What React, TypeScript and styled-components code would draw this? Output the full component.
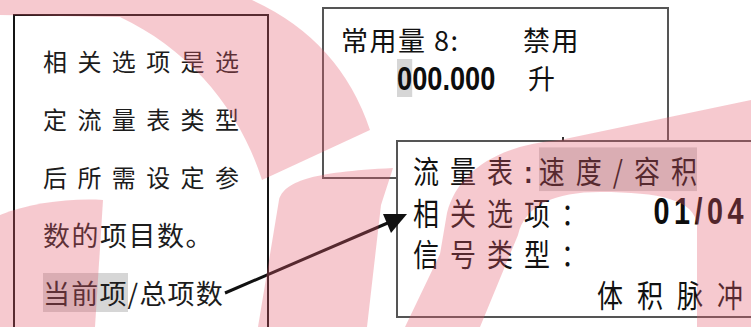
import React from "react";
import styled, { createGlobalStyle } from "styled-components";

const CJK = `"Noto Sans CJK SC", "Noto Sans", sans-serif`;
const NUM = `"Liberation Sans", Arial, sans-serif`;

const GlobalStyle = createGlobalStyle`
  html, body {
    margin: 0;
    padding: 0;
    background: #fff;
  }
  body {
    width: 751px;
    height: 327px;
    overflow: hidden;
    font-family: ${CJK};
    color: #111;
  }
`;

const Page = styled.div`
  position: relative;
  width: 751px;
  height: 327px;
  overflow: hidden;
  display: flex;
  align-items: flex-start;
  background: #fff;
`;

/* left explanation box */
const NoteBox = styled.div`
  flex: none;
  box-sizing: border-box;
  width: 256px;
  height: 340px;
  margin: 14px 0 0 13px;
  border: 2px solid #141414;
  padding: 16px 0 0 28px;
  display: flex;
  flex-direction: column;
`;

const NoteLine = styled.div<{ $size: number; $spacing: number }>`
  font-family: ${CJK};
  font-size: ${(p) => p.$size}px;
  letter-spacing: ${(p) => p.$spacing}px;
  line-height: 58px;
  height: 58px;
  white-space: nowrap;
  color: #1c1c1c;
`;

const Mark = styled.span`
  background: #d6d6d6;
`;

// last glyph of a spaced run, so no trailing gap sticks out
const Tail = styled.span`
  letter-spacing: 0;
`;

/* right side: two screens */
const Screens = styled.div`
  flex: none;
  display: flex;
  flex-direction: column;
  align-items: flex-start;
  margin: 7px 0 0 53px;
`;

const TopScreen = styled.div`
  flex: none;
  box-sizing: border-box;
  width: 347px;
  height: 172px;
  border: 2px solid #555;
  padding: 12px 0 0 17px;
  display: grid;
  grid-template-columns: 182px auto;
  grid-auto-rows: 38px;
  align-content: start;
  align-items: center;
  font-family: ${CJK};
  font-size: 27px;
  letter-spacing: 1.5px;
  white-space: nowrap;
`;

const Cell = styled.div<{ $indent?: number }>`
  padding-left: ${(p) => p.$indent || 0}px;
  line-height: 38px;
`;

const BigNum = styled.span<{ $size: number; $spacing?: number; $origin: string }>`
  display: inline-block;
  font-family: ${NUM};
  font-weight: 700;
  font-size: ${(p) => p.$size}px;
  letter-spacing: ${(p) => p.$spacing || 0}px;
  transform: scaleX(0.8);
  transform-origin: ${(p) => p.$origin};
  color: #0d0d0d;
`;

const PanelScreen = styled.div`
  flex: none;
  position: relative;
  z-index: 1;
  box-sizing: border-box;
  width: 420px;
  height: 178px;
  margin: -39px 0 0 74px;
  background: #fff;
  border: 2px solid #555;
  padding: 8px 0 0 15px;

  &::before {
    content: "";
    position: absolute;
    left: 164px;
    top: -5px;
    width: 2px;
    height: 4px;
    background: #333;
  }
`;

const PanelRow = styled.div<{ $end?: boolean }>`
  width: 330px;
  height: 41px;
  display: flex;
  align-items: center;
  justify-content: ${(p) => (p.$end ? "flex-end" : "space-between")};
`;

const PanelText = styled.span<{ $spacing: number }>`
  display: inline-block;
  font-family: ${CJK};
  font-size: 26px;
  line-height: 41px;
  letter-spacing: ${(p) => p.$spacing}px;
  transform: scaleY(1.18);
  white-space: nowrap;
  color: #111;
`;

const Colon = styled.span`
  font-family: ${NUM};
  font-weight: 700;
  letter-spacing: 6px;
`;

const Overlay = styled.svg<{ $z: number }>`
  position: absolute;
  left: 0;
  top: 0;
  width: 751px;
  height: 327px;
  pointer-events: none;
  z-index: ${(p) => p.$z};
`;

const Arrow = () => (
  <Overlay $z={4} viewBox="0 0 751 327">
    <line x1="225" y1="293" x2="390" y2="222" stroke="#111" strokeWidth="3" />
    <polygon points="407,214 383,214 391,233" fill="#111" />
  </Overlay>
);

// pink watermark lying over the whole picture
const Watermark = () => (
  <Overlay $z={5} viewBox="0 0 751 327">
    <g fill="#e45a6c" fillOpacity="0.33">
      <path d="M0 0 L252 0 Q340 40 370 130 L262 180 C240 110 190 50 120 17 L0 15 Z" />
      <path d="M0 215 C30 203 70 198 103 200 L95 327 L0 327 Z" />
      <path d="M258 327 L279 200 C284 182 310 172 393 168 L381 205 L367 327 Z" />
      <path d="M405 327 L440 254 L447 213 C458 170 500 145 560 140 L751 100 L751 327 L697 327 L697 225 C695 200 660 192 600 192 C555 192 525 205 518 235 L480 327 Z" />
    </g>
  </Overlay>
);

export default function App() {
  return (
    <>
      <GlobalStyle />
      <Page>
        <NoteBox>
          <NoteLine $size={24} $spacing={10.4}>相关选项是选</NoteLine>
          <NoteLine $size={24} $spacing={10.4}>定流量表类型</NoteLine>
          <NoteLine $size={24} $spacing={10.4}>后所需设定参</NoteLine>
          <NoteLine $size={27} $spacing={1.5}>数的项目数。</NoteLine>
          <NoteLine $size={27} $spacing={1.2}>
            <Mark>当前项</Mark>/总项数
          </NoteLine>
        </NoteBox>

        <Screens>
          <TopScreen>
            <Cell>常用量 8:</Cell>
            <Cell>禁用</Cell>
            <Cell $indent={56}>
              <BigNum $size={34} $origin="left center">
                <Mark>0</Mark>00.000
              </BigNum>
            </Cell>
            <Cell $indent={5}>升</Cell>
          </TopScreen>

          <PanelScreen>
            <PanelRow>
              <PanelText $spacing={11}>
                流量表<Colon>:</Colon>
                <Mark>
                  速度/容<Tail>积</Tail>
                </Mark>
              </PanelText>
            </PanelRow>
            <PanelRow>
              <PanelText $spacing={11}>相关选项：</PanelText>
              <BigNum $size={36} $spacing={5.6} $origin="right center">
                01/0<Tail>4</Tail>
              </BigNum>
            </PanelRow>
            <PanelRow>
              <PanelText $spacing={11}>信号类型：</PanelText>
            </PanelRow>
            <PanelRow $end>
              <PanelText $spacing={14}>
                体积脉<Tail>冲</Tail>
              </PanelText>
            </PanelRow>
          </PanelScreen>
        </Screens>

        <Arrow />
        <Watermark />
      </Page>
    </>
  );
}
